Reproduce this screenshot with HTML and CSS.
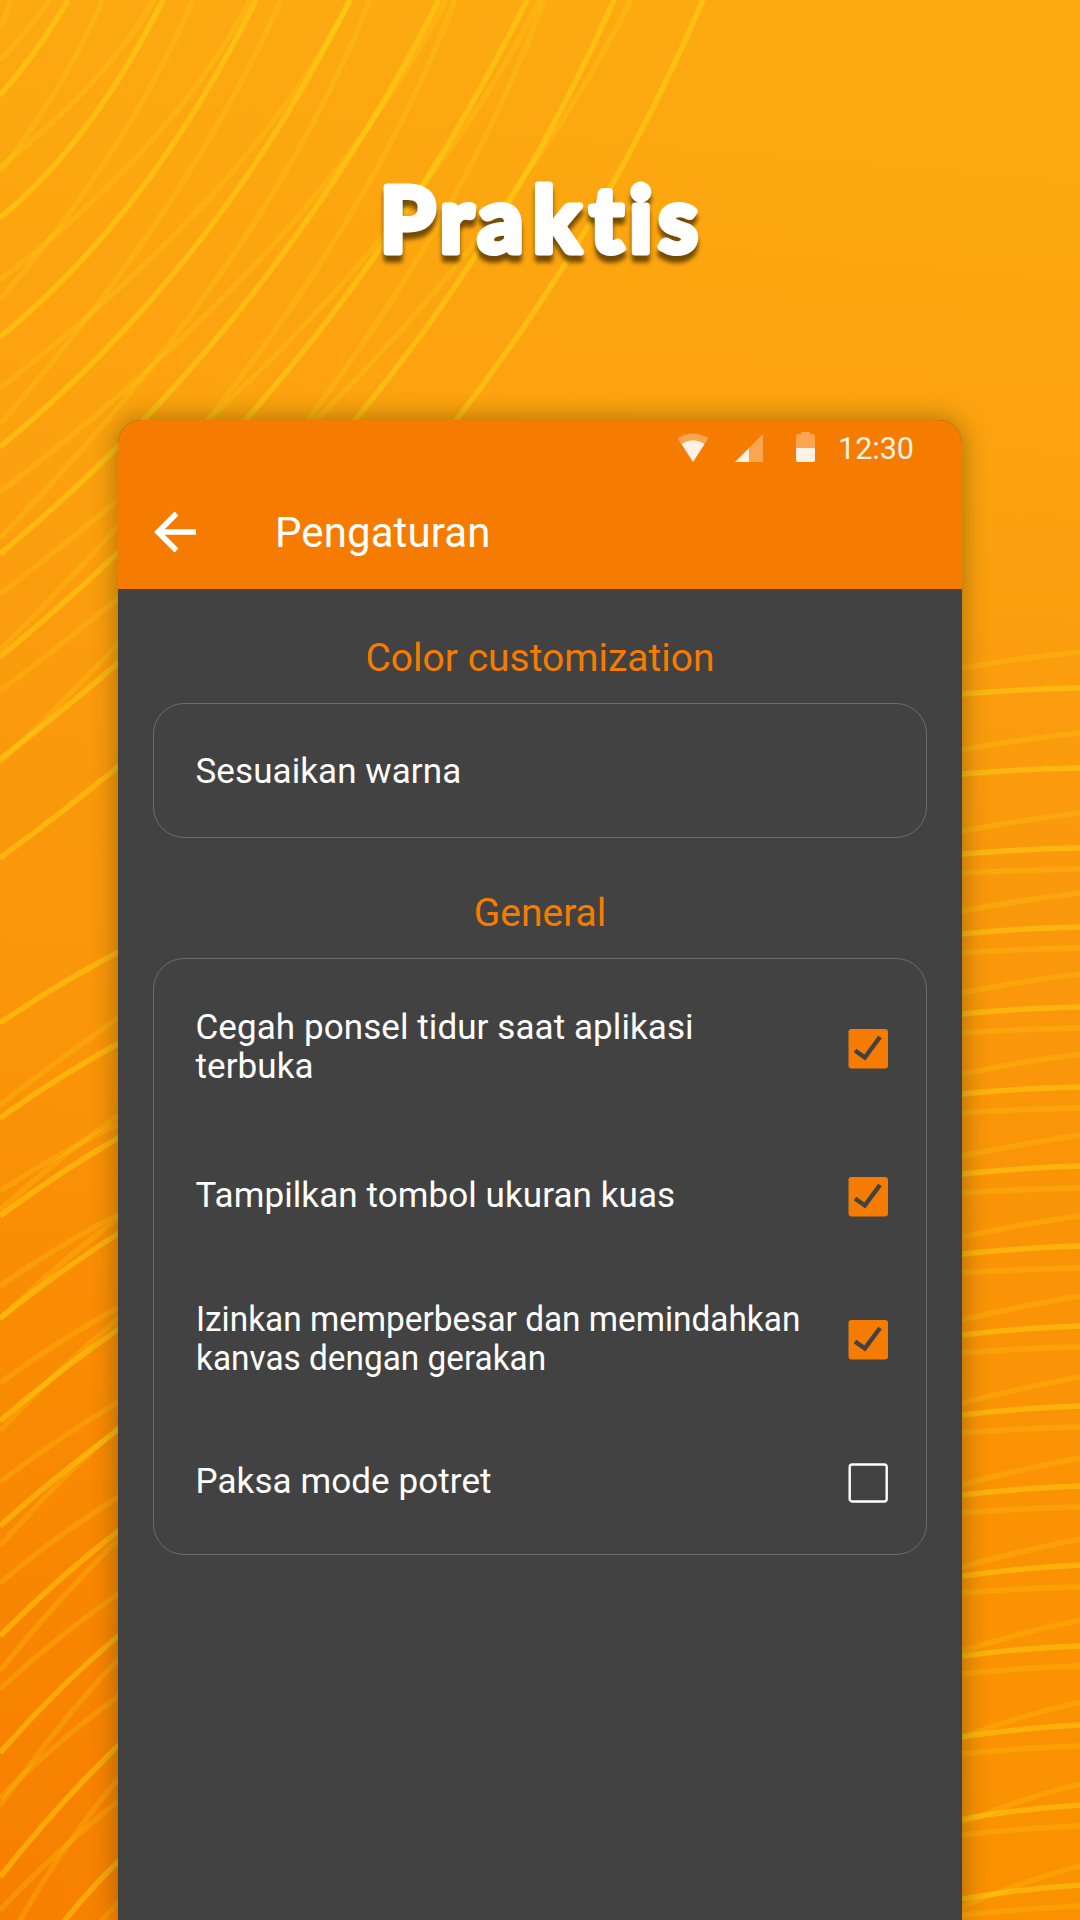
FILE: index.html
```html
<!DOCTYPE html>
<html lang="id">
<head>
<meta charset="utf-8">
<title>Praktis</title>
<link rel="stylesheet" href="styles.css">
</head>
<body>
<main class="poster">
  <svg class="waves" viewBox="0 0 1080 1920" aria-hidden="true">
    <g class="bright">
      <path d="M68 0Q36 55 0 95"/><path d="M163 0Q92 142 0 218"/><path d="M256 0Q150 215 0 337"/><path d="M350 0Q215 270 0 447"/><path d="M439 0Q272 328 0 554"/><path d="M527 0Q340 378 0 657"/><path d="M614 0Q420 440 0 759"/><path d="M703 0Q488 503 0 858"/>
      <path d="M0 1023Q60 982 130 946"/><path d="M0 1118Q60 1075 130 1037"/><path d="M0 1216Q60 1171 130 1131"/><path d="M0 1318Q60 1270 130 1226"/><path d="M0 1421Q60 1369 130 1321"/><path d="M0 1526Q60 1472 130 1421"/><path d="M0 1636Q60 1575 130 1522"/><path d="M0 1753Q60 1684 130 1626"/><path d="M0 1877Q60 1801 130 1734"/><path d="M62 1924Q90 1888 130 1850"/>
      <path d="M962 694Q1020 689 1080 688"/><path d="M962 774Q1020 769 1080 768"/><path d="M962 854Q1020 849 1080 848"/><path d="M962 934Q1020 928 1080 927"/><path d="M962 1014Q1020 1008 1080 1007"/><path d="M962 1094Q1020 1088 1080 1087"/><path d="M962 1174Q1020 1168 1080 1166"/><path d="M962 1254Q1020 1248 1080 1246"/><path d="M962 1335Q1020 1328 1080 1326"/><path d="M962 1415Q1020 1408 1080 1406"/><path d="M962 1495Q1020 1488 1080 1486"/><path d="M962 1576Q1020 1568 1080 1565"/><path d="M962 1656Q1020 1648 1080 1646"/><path d="M962 1737Q1020 1728 1080 1725"/><path d="M962 1819Q1020 1809 1080 1805"/><path d="M962 1899Q1020 1889 1080 1885"/>
    </g>
    <g class="dim">
      <path d="M11 0Q6 16 0 28"/><path d="M103 0Q62 92 0 172"/><path d="M193 0Q128 152 0 300"/><path d="M281 0Q190 206 0 424"/><path d="M370 0Q265 265 0 538"/><path d="M455 0Q335 318 0 650"/><path d="M544 0Q410 368 0 763"/>
      <path d="M50 0Q27 32 0 60"/><path d="M154 0Q104 85 0 167"/><path d="M250 0Q175 145 0 280"/><path d="M350 0Q250 195 0 388"/><path d="M446 0Q318 250 0 492"/><path d="M540 0Q388 300 0 594"/><path d="M631 0Q456 349 0 691"/>
      <path d="M0 1191Q60 1152 130 1118"/><path d="M0 1286Q60 1244 130 1208"/><path d="M0 1383Q60 1339 130 1301"/><path d="M0 1482Q60 1436 130 1395"/><path d="M0 1583Q60 1532 130 1490"/><path d="M0 1689Q60 1633 130 1586"/><path d="M0 1798Q60 1737 130 1688"/><path d="M0 1910Q60 1846 130 1792"/>
      <path d="M0 1105Q60 1058 130 1010"/><path d="M0 1210Q60 1156 130 1107"/><path d="M0 1319Q60 1261 130 1209"/><path d="M0 1431Q60 1366 130 1309"/><path d="M0 1546Q60 1477 130 1418"/><path d="M0 1671Q60 1595 130 1528"/><path d="M0 1806Q60 1720 130 1646"/><path d="M18 1924Q65 1840 130 1765"/><path d="M98 1924L130 1891"/>
      <path d="M962 668Q1020 658 1080 652"/><path d="M962 750Q1020 739 1080 733"/><path d="M962 831Q1020 820 1080 813"/><path d="M962 911Q1020 900 1080 893"/><path d="M962 993Q1020 981 1080 974"/><path d="M962 1074Q1020 1062 1080 1054"/><path d="M962 1156Q1020 1144 1080 1135"/><path d="M962 1237Q1020 1224 1080 1216"/><path d="M962 1320Q1020 1306 1080 1296"/><path d="M962 1403Q1020 1388 1080 1377"/><path d="M962 1485Q1020 1469 1080 1458"/><path d="M962 1567Q1020 1551 1080 1539"/><path d="M962 1651Q1020 1633 1080 1620"/><path d="M962 1737Q1020 1716 1080 1702"/><path d="M962 1823Q1020 1799 1080 1784"/><path d="M962 1907Q1020 1882 1080 1866"/>
      <path d="M962 873Q1020 870 1080 869"/><path d="M962 953Q1020 949 1080 948"/><path d="M962 1033Q1020 1029 1080 1028"/><path d="M962 1113Q1020 1109 1080 1108"/><path d="M962 1193Q1020 1189 1080 1188"/><path d="M962 1273Q1020 1269 1080 1268"/><path d="M962 1353Q1020 1348 1080 1347"/><path d="M962 1433Q1020 1428 1080 1427"/><path d="M962 1513Q1020 1508 1080 1507"/><path d="M962 1593Q1020 1588 1080 1587"/><path d="M962 1674Q1020 1668 1080 1666"/><path d="M962 1754Q1020 1748 1080 1746"/><path d="M962 1835Q1020 1828 1080 1826"/><path d="M962 1915Q1020 1909 1080 1906"/>
    </g>
  </svg>

  <h1 class="headline">
    <svg viewBox="0 0 1080 420"><text x="380 440 478 533 590 629.500 658.500" y="252">Praktis</text></svg>
  </h1>

  <section class="phone">
    <header class="header">
      <div class="status">
        <svg class="wifi" viewBox="0 0 32 30"><path class="faint" d="M0 5.5Q16-4.500 32 5.5L28 11.5Q16 3.500 4 11.5Z"/><path d="M4 11.5Q16 3.500 28 11.500L16 30Z"/></svg>
        <svg class="signal" viewBox="0 0 28 28"><path class="faint" d="M14 14L28 0V28H14Z"/><path d="M0 28L14 14V28Z"/></svg>
        <svg class="battery" viewBox="0 0 19 30"><path class="faint" d="M0 16V4Q0 2 2 2H5V0H14V2H17Q19 2 19 4V16Z"/><path d="M0 16H19V28Q19 30 17 30H2Q0 30 0 28Z"/></svg>
        <span class="clock">12:30</span>
      </div>
      <div class="toolbar">
        <svg class="back" viewBox="0 0 42 42"><path d="M22.500 2.500L4 21L22.500 39.500M3 21H42"/></svg>
        <span class="title">Pengaturan</span>
      </div>
    </header>

    <div class="content">
      <h2 class="section">Color customization</h2>
      <div class="card">
        <div class="row single"><span class="label">Sesuaikan warna</span></div>
      </div>

      <h2 class="section">General</h2>
      <div class="card options">
        <div class="row">
          <span class="label">Cegah ponsel tidur saat aplikasi<br>terbuka</span>
          <svg class="box on" viewBox="0 0 40 40"><rect x="0.500" width="39.500" height="39.500" rx="3"/><path d="M7 21.500L16.800 28.500L32 8"/></svg>
        </div>
        <div class="row">
          <span class="label">Tampilkan tombol ukuran kuas</span>
          <svg class="box on" viewBox="0 0 40 40"><rect x="0.500" width="39.500" height="39.500" rx="3"/><path d="M7 21.500L16.800 28.500L32 8"/></svg>
        </div>
        <div class="row">
          <span class="label condensed">Izinkan memperbesar dan memindahkan<br>kanvas dengan gerakan</span>
          <svg class="box on" viewBox="0 0 40 40"><rect x="0.500" width="39.500" height="39.500" rx="3"/><path d="M7 21.500L16.800 28.500L32 8"/></svg>
        </div>
        <div class="row">
          <span class="label">Paksa mode potret</span>
          <svg class="box" viewBox="0 0 40 40"><rect x="1.700" y="1.500" width="37" height="37" rx="2.500"/></svg>
        </div>
      </div>
    </div>
  </section>
</main>
</body>
</html>
```
FILE: styles.css
```css
* { box-sizing: border-box; }

body {
  margin: 0;
  font-family: Roboto, sans-serif;
}

.poster {
  position: relative;
  display: flex;
  flex-direction: column;
  align-items: center;
  width: 1080px;
  height: 1920px;
  overflow: hidden;
  background:
    radial-gradient(ellipse 800px 900px at 0 100%, #f77f00 0%, rgba(247, 127, 0, 0) 100%),
    linear-gradient(185deg, #fdaa11 0%, #fca30f 22%, #fa990c 42%, #fa9306 65%, #fa9100 100%);
}

.waves {
  position: absolute;
  inset: 0;
  width: 1080px;
  height: 1920px;
  fill: none;
  stroke-width: 5.5;
}
.bright { stroke: rgba(255, 226, 20, 0.4); }
.dim { stroke: rgba(255, 226, 20, 0.19); }

.headline {
  position: relative;
  margin: 0;
  width: 1080px;
  height: 420px;
  filter: drop-shadow(0 7px 2px rgba(60, 35, 0, 0.7));
}
.headline svg {
  display: block;
  width: 1080px;
  height: 420px;
}
.headline text {
  font: 700 89px Lato, sans-serif;
  fill: #fff;
  stroke: #fff;
  stroke-width: 7px;
  stroke-linejoin: round;
}

.phone {
  position: relative;
  flex: 1;
  width: 844px;
  border-radius: 24px 24px 0 0;
  background: #424242;
  box-shadow: 0 0 26px rgba(50, 50, 0, 0.45);
}

.header {
  height: 169px;
  border-radius: 24px 24px 0 0;
  background: #f57c00;
  color: #fff;
}

.status {
  display: flex;
  align-items: center;
  justify-content: flex-end;
  height: 56px;
  padding-right: 48px;
  fill: #fff1e3;
}
.faint { fill: #faa550; }
.wifi { width: 32px; height: 29px; margin: -1px 26px 0 0; }
.signal { width: 28px; height: 28px; margin-right: 33px; }
.battery { width: 19px; height: 30px; margin: -2px 23px 0 0; }
.clock {
  padding-top: 1px;
  font-size: 30.5px;
  line-height: 56px;
  color: #fff1e3;
}

.toolbar {
  display: flex;
  align-items: center;
  gap: 79px;
  height: 112px;
  padding-left: 36px;
}
.back {
  width: 42px;
  height: 42px;
  fill: none;
  stroke: #fff;
  stroke-width: 5.6;
}
.title {
  font-size: 42px;
  letter-spacing: 0.1px;
}

.content {
  padding: 0 35px;
}
.section {
  display: flex;
  align-items: center;
  justify-content: center;
  height: 120px;
  margin: 0;
  padding-top: 29px;
  color: #f57c00;
  font-size: 39px;
  font-weight: 400;
}
.section:first-child {
  height: 114px;
  padding-top: 24px;
}

.card {
  border: 1px solid #6c6c6c;
  border-radius: 31px;
}
.row {
  display: flex;
  align-items: center;
  justify-content: space-between;
  height: 143px;
  padding: 0 38px 0 41.5px;
}
.row.single {
  height: 133px;
  padding-top: 5px;
}
.options {
  height: 597px;
  padding-top: 13px;
}
.options .row:first-child { height: 153px; }

.label {
  color: #fff;
  font-size: 35px;
  line-height: 39px;
  letter-spacing: 0.08px;
  transform: translateY(-2px);
}
.row:nth-child(n+2) .label { transform: translateY(-1px); }
.row .label.condensed {
  flex: none;
  margin-right: -40px;
  letter-spacing: 0;
  transform: translateY(-1px) scaleX(0.953);
  transform-origin: left;
}
.box {
  flex: none;
  width: 40px;
  height: 40px;
  fill: none;
  stroke: #fff;
  stroke-width: 2.4;
}
.box.on rect { fill: #f57c00; stroke: none; }
.box.on path { stroke: #424242; stroke-width: 4.5; }
```
